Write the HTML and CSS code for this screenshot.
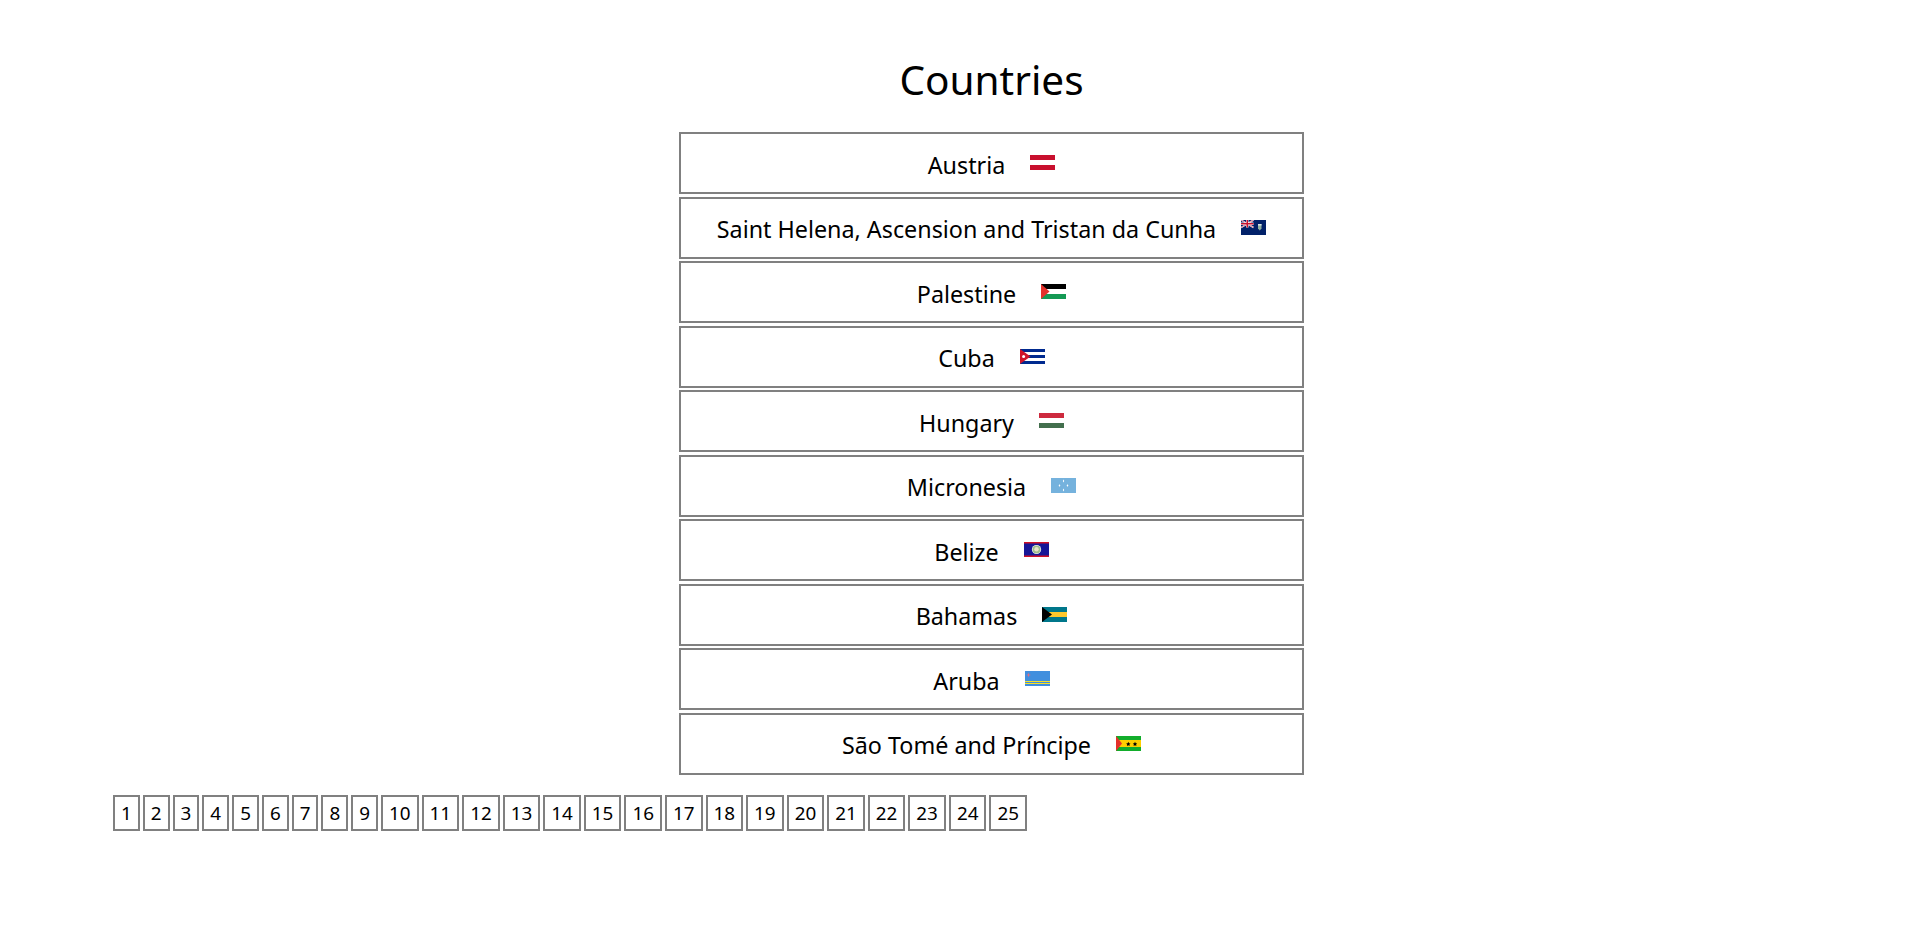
FILE: index.html
```html
<!DOCTYPE html>
<html lang="en">
<head>
  <meta charset="UTF-8">
  <title>Countries</title>
  <link rel="stylesheet" href="styles.css">
</head>
<body>
  <h1>Countries</h1>

  <ul class="countries">
    <li class="country">
      <span>Austria</span>
      <svg class="flag" viewBox="0 0 25 15"><rect width="25" height="15" fill="#fff"/><rect width="25" height="5" fill="#c8102e"/><rect y="10" width="25" height="5" fill="#c8102e"/></svg>
    </li>
    <li class="country">
      <span>Saint Helena, Ascension and Tristan da Cunha</span>
      <svg class="flag" viewBox="0 0 25 15"><rect width="25" height="15" fill="#012169"/><rect width="12.5" height="7.5" fill="#012169"/><path d="M0 0L12.5 7.5M12.5 0L0 7.5" stroke="#fff" stroke-width="1.5"/><path d="M0 0L12.5 7.5M12.5 0L0 7.5" stroke="#c8102e" stroke-width=".5"/><path d="M6.25 0V7.5M0 3.75H12.5" stroke="#fff" stroke-width="2.5"/><path d="M6.25 0V7.5M0 3.75H12.5" stroke="#c8102e" stroke-width="1.5"/><path d="M17 4H20.5V8.5L18.75 10.5L17 8.5Z" fill="#8fb0a0"/><rect x="17" y="4" width="3.5" height="1.5" fill="#d8e4ea"/></svg>
    </li>
    <li class="country">
      <span>Palestine</span>
      <svg class="flag" viewBox="0 0 25 15"><rect width="25" height="5" fill="#000"/><rect y="5" width="25" height="5" fill="#fff"/><rect y="10" width="25" height="5" fill="#149954"/><path d="M0 0L8.5 7.5L0 15Z" fill="#e4312b"/></svg>
    </li>
    <li class="country">
      <span>Cuba</span>
      <svg class="flag" viewBox="0 0 25 15"><rect width="25" height="15" fill="#fff"/><rect width="25" height="3" fill="#002a8f"/><rect y="6" width="25" height="3" fill="#002a8f"/><rect y="12" width="25" height="3" fill="#002a8f"/><path d="M0 0L10.5 7.5L0 15Z" fill="#cf142b"/><circle cx="3.6" cy="7.5" r="1.5" fill="#fff"/></svg>
    </li>
    <li class="country">
      <span>Hungary</span>
      <svg class="flag" viewBox="0 0 25 15"><rect width="25" height="5" fill="#cd2a3e"/><rect y="5" width="25" height="5" fill="#fff"/><rect y="10" width="25" height="5" fill="#436f4d"/></svg>
    </li>
    <li class="country">
      <span>Micronesia</span>
      <svg class="flag" viewBox="0 0 25 15"><rect width="25" height="15" fill="#75b2dd"/><g fill="#fff"><path d="M12.5 1.4L13.2 2.9L12.5 4.4L11.8 2.9Z"/><path d="M12.5 10.6L13.2 12.1L12.5 13.6L11.8 12.1Z"/><path d="M8.5 6L9.2 7.5L8.5 9L7.8 7.5Z"/><path d="M16.5 6L17.2 7.5L16.5 9L15.8 7.5Z"/></g></svg>
    </li>
    <li class="country">
      <span>Belize</span>
      <svg class="flag" viewBox="0 0 25 15"><rect width="25" height="15" fill="#ce1126"/><rect y="1.5" width="25" height="12" fill="#171696"/><circle cx="12.5" cy="7.5" r="4.6" fill="#fff"/><circle cx="12.5" cy="7.5" r="4" fill="#9fbf8f"/><circle cx="12.5" cy="7.3" r="2.2" fill="#e8e4c8"/></svg>
    </li>
    <li class="country">
      <span>Bahamas</span>
      <svg class="flag" viewBox="0 0 25 15"><rect width="25" height="15" fill="#00778b"/><rect y="5" width="25" height="5" fill="#ffc72c"/><path d="M0 0L10 7.5L0 15Z" fill="#000"/></svg>
    </li>
    <li class="country">
      <span>Aruba</span>
      <svg class="flag" viewBox="0 0 25 15"><rect width="25" height="15" fill="#418fde"/><rect y="10" width="25" height="1" fill="#fbe122"/><rect y="12" width="25" height="1" fill="#fbe122"/><path d="M3.5 1.5L4 3.5L6 4L4 4.5L3.5 6.5L3 4.5L1 4L3 3.5Z" fill="#ef6a7a"/></svg>
    </li>
    <li class="country">
      <span>São Tomé and Príncipe</span>
      <svg class="flag" viewBox="0 0 25 15"><rect width="25" height="15" fill="#12ad2b"/><rect y="4" width="25" height="7" fill="#ffce00"/><path d="M0 0L6 7.5L0 15Z" fill="#e4312b"/><g fill="#000"><path d="M12.3 5.7L13 7.2L14.5 7.4L13.4 8.4L13.7 9.9L12.3 9.2L10.9 9.9L11.2 8.4L10.1 7.4L11.6 7.2Z"/><path d="M19 5.7L19.7 7.2L21.2 7.4L20.1 8.4L20.4 9.9L19 9.2L17.6 9.9L17.9 8.4L16.8 7.4L18.3 7.2Z"/></g></svg>
    </li>
  </ul>

  <div class="pages">
    <button>1</button><button>2</button><button>3</button><button>4</button><button>5</button>
    <button>6</button><button>7</button><button>8</button><button>9</button><button>10</button>
    <button>11</button><button>12</button><button>13</button><button>14</button><button>15</button>
    <button>16</button><button>17</button><button>18</button><button>19</button><button>20</button>
    <button>21</button><button>22</button><button>23</button><button>24</button><button>25</button>
  </div>
</body>
</html>
```

FILE: styles.css
```css
* {
  box-sizing: border-box;
}

body {
  margin: 0;
  padding: 0 50px 0 113px;
  background: #fff;
  color: #000;
  font-family: "Noto Sans", "Open Sans", sans-serif;
}

h1 {
  margin: 0;
  padding-top: 50px;
  height: 132px;
  text-align: center;
  font-size: 40.5px;
  font-weight: 400;
  line-height: 60px;
}

.countries {
  list-style: none;
  margin: 0 auto;
  padding: 0;
  width: 625px;
}

.country {
  display: flex;
  justify-content: center;
  align-items: center;
  gap: 25px;
  height: 62px;
  margin-bottom: 2.5px;
  border: 2px solid #808080;
  font-size: 23.3px;
}

.country span {
  padding-top: 3px;
}

.flag {
  width: 25px;
  height: 15px;
  margin-top: -1px;
}

.pages {
  display: flex;
  gap: 3px;
  margin-top: 20px;
}

.pages button {
  height: 36px;
  padding: 0 6px;
  border: 2px solid #808080;
  background: #fff;
  color: #000;
  font-family: inherit;
  font-size: 18.85px;
}
```
